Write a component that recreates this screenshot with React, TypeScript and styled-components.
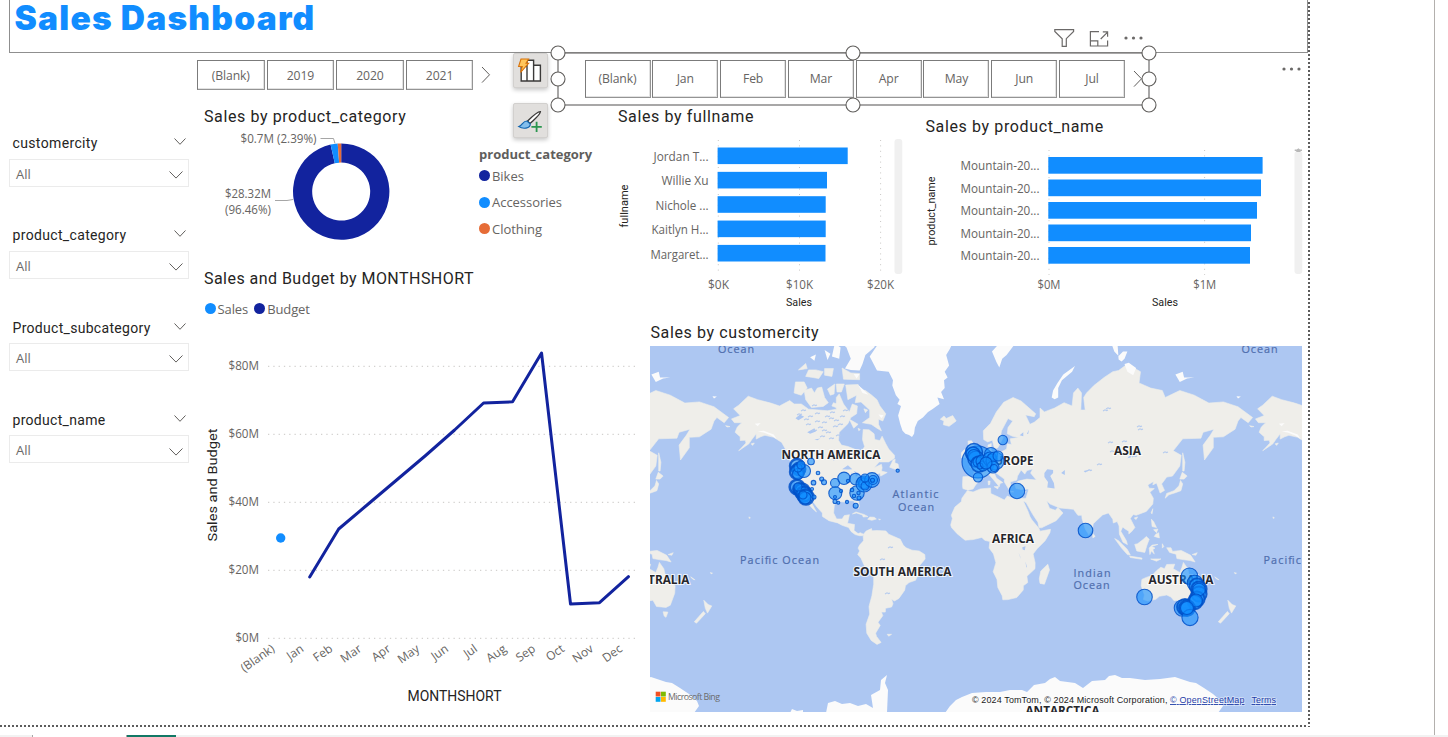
import React from 'react';
import styled, { createGlobalStyle } from 'styled-components';

const UI = "'Open Sans', 'Noto Sans', sans-serif";
const DIN = "Roboto, 'Liberation Sans', sans-serif";
const BLUE = '#118dff';
const NAVY = '#12239e';
const ORANGE = '#e66c37';
const GREY = '#666462';

const Global = createGlobalStyle`
  * { box-sizing: border-box; }
  body { margin: 0; background: #fff; overflow: hidden; font-family: ${UI}; }
  svg { display: block; }
`;

/* ---------- page frame ---------- */

const Page = styled.div`
  width: 1448px;
  height: 737px;
  display: flex;
  flex-direction: column;
  overflow: hidden;
  background: #fff;
`;

const Workspace = styled.div`
  display: flex;
  height: 735px;
  width: 1448px;
  justify-content: space-between;
`;

const SidePane = styled.div`
  width: 14px;
  border-left: 1px solid #b3b0ad;
`;

const Report = styled.main`
  position: relative;
  width: 1310px;
  height: 727px;
  background:
    repeating-linear-gradient(to bottom, #fff 0 2px, #5c5c5c 2px 4px) right top / 2px 727px no-repeat,
    repeating-linear-gradient(to right, #5c5c5c 0 2px, #fff 2px 4px) left bottom / 1310px 2px no-repeat,
    #fff;
`;

const TitleBox = styled.header`
  display: flex;
  align-items: flex-start;
  width: 1299px;
  height: 53px;
  margin-left: 9px;
  padding-left: 4.5px;
  border: solid #8f8f8f;
  border-width: 0 1px 1px 1px;
`;

const Title = styled.h1`
  margin: 0;
  font: 900 33.5px/37px Inter, 'Open Sans', sans-serif;
  letter-spacing: 1.23px;
  white-space: nowrap;
  color: ${BLUE};
`;

const Body = styled.div`
  display: flex;
  height: 672px;
`;

const TabStrip = styled.footer`
  display: flex;
  height: 2px;
  background: #f2f2f2;
`;

const TabSegment = styled.div<{ $w: number; $color: string }>`
  width: ${p => p.$w}px;
  background: ${p => p.$color};
`;

/* ---------- left filters ---------- */

const Filters = styled.aside`
  width: 197px;
  padding: 80px 8px 0 9px;
  display: flex;
  flex-direction: column;
  gap: 38.3px;
`;

const FilterBlock = styled.section`
  height: 54px;
  display: flex;
  flex-direction: column;
`;

const FilterHead = styled.div`
  display: flex;
  justify-content: space-between;
  height: 25.6px;
  padding: 0 3px 0 3.5px;
  font: 400 14px/20px ${DIN};
  color: #252423;
`;

const FilterLabel = styled.span<{ $ls: number }>`
  letter-spacing: ${p => p.$ls}px;
  white-space: nowrap;
`;

const FilterBox = styled.div`
  display: flex;
  justify-content: space-between;
  align-items: center;
  height: 28px;
  padding: 2px 5px 0 6px;
  border: 1px solid #ebebeb;
  font: 400 13px/20px ${UI};
  color: #6c6a69;
`;

/* ---------- content ---------- */

const Content = styled.div`
  width: 1111px;
  display: flex;
  flex-direction: column;
`;

const SlicerRow = styled.div`
  display: flex;
  height: 52px;
  align-items: flex-start;
`;

const YearSlicer = styled.div`
  display: flex;
  align-items: center;
  gap: 2px;
  width: 361px;
  height: 30px;
  margin-top: 7px;
`;

const MonthSlicer = styled.div`
  position: relative;
  display: flex;
  align-items: center;
  gap: 1.8px;
  width: 591px;
  height: 52px;
  padding-left: 26.5px;
  padding-bottom: 1px;
`;

const Tile = styled.button<{ $w: number; $h: number }>`
  flex: none;
  width: ${p => p.$w}px;
  height: ${p => p.$h}px;
  padding: 1px 0 0;
  border: 1px solid #7b7b7b;
  border-right-color: #949494;
  border-bottom-color: #949494;
  box-shadow: inset -1px -1px 0 #e2e2e2;
  background: #fff;
  font: 400 12.2px/18px ${UI};
  letter-spacing: -0.1px;
  color: ${GREY};
`;

const NextIcon = styled.svg`
  flex: none;
  margin-left: 5px;
`;

const SelectionFrame = styled.svg`
  position: absolute;
  left: -8px;
  top: -8px;
  overflow: visible;
`;

const VisualHeader = styled.div`
  position: absolute;
  left: 1054px;
  top: 28px;
`;

const MoreOptions = styled.div`
  position: absolute;
  left: 1282px;
  top: 66px;
`;

const FloatButtons = styled.div`
  position: absolute;
  left: 513px;
  top: 53px;
  display: flex;
  flex-direction: column;
  gap: 15px;
`;

const FloatButton = styled.button`
  width: 35px;
  height: 35px;
  padding: 0;
  border: 1px solid #d2d0ce;
  border-radius: 2px;
  background: #e1dfdd;
  box-shadow: 0 2px 4px rgba(0, 0, 0, 0.22);
`;

const Columns = styled.div`
  display: flex;
`;

const LeftColumn = styled.div`
  width: 415px;
`;

const RightColumn = styled.div`
  width: 696px;
`;

const ChartRow = styled.div`
  display: flex;
  height: 215px;
`;

const Visual = styled.section<{ $w: number; $top?: number }>`
  width: ${p => p.$w}px;
  padding-top: ${p => p.$top ?? 0}px;
`;

const VisualTitle = styled.h2<{ $indent: number; $ls: number; $drop?: number }>`
  margin: 0;
  height: 24px;
  padding-top: ${p => p.$drop ?? 0}px;
  padding-left: ${p => p.$indent}px;
  font: 400 16px/23px ${DIN};
  letter-spacing: ${p => p.$ls}px;
  color: #252423;
  white-space: nowrap;
`;

const Plot = styled.svg`
  overflow: visible;
  font-family: ${UI};
`;

const DonutRow = styled.div`
  display: flex;
  height: 137px;
`;

const Legend = styled.ul`
  list-style: none;
  margin: 0;
  padding: 37.5px 0 0 7px;
`;

const LegendTitle = styled.li`
  height: 20px;
  font: 700 13px/22px ${UI};
  color: #605e5c;
`;

const LegendItem = styled.li`
  display: flex;
  align-items: center;
  gap: 2px;
  height: 26.5px;
  font: 400 13px/18px ${UI};
  letter-spacing: -0.03px;
  color: ${GREY};
`;

const Dot = styled.span<{ $c: string }>`
  width: 11px;
  height: 11px;
  border-radius: 50%;
  background: ${p => p.$c};
`;

const InlineLegend = styled.div`
  display: flex;
  align-items: center;
  gap: 1px;
  height: 30px;
  padding: 6px 0 0 7.5px;
  font: 400 13px/18px ${UI};
  color: ${GREY};
`;

const InlineLabel = styled.span`
  margin-right: 5px;
  padding: 2px 0 0 1px;
  letter-spacing: -0.1px;
`;

const MapSection = styled.section`
  padding-left: 38px;
`;

const MapPlot = styled.svg`
  margin-top: 2px;
  font-family: ${UI};
`;

/* ---------- small pieces ---------- */

const Chevron = ({ w, h }: { w: number; h: number }) => (
  <svg width={w} height={h + 9} viewBox={`0 0 ${w} ${h + 9}`} fill="none" stroke="#605e5c" strokeWidth="1">
    <path d={`M.5 5.5 L${w / 2} ${h + 5.5} L${w - 0.5} 5.5`} />
  </svg>
);

const Next = () => (
  <NextIcon width="12" height="18" viewBox="0 0 12 18" fill="none" stroke="#605e5c">
    <path d="M2 1 L9.5 8.8 L2 16.6" />
  </NextIcon>
);

type TProps = {
  x: number; y: number; s?: number; len?: number; anchor?: 'start' | 'middle' | 'end';
  fill?: string; font?: string; rotate?: number; children: string;
};
const T = ({ x, y, s = 12, len, anchor = 'middle', fill = GREY, font, rotate, children }: TProps) => (
  <text
    x={x} y={y} fontSize={s} textAnchor={anchor} fill={fill} fontFamily={font}
    textLength={len} lengthAdjust={len ? 'spacingAndGlyphs' : undefined}
    transform={rotate ? `rotate(${rotate} ${x} ${y})` : undefined}
  >
    {children}
  </text>
);

const filters = [
  { name: 'customercity', ls: 0.36 },
  { name: 'product_category', ls: 0.34 },
  { name: 'Product_subcategory', ls: 0.3 },
  { name: 'product_name', ls: 0.3 },
];

const years = ['(Blank)', '2019', '2020', '2021'];
const monthTiles = ['(Blank)', 'Jan', 'Feb', 'Mar', 'Apr', 'May', 'Jun', 'Jul'];
const months = ['(Blank)', 'Jan', 'Feb', 'Mar', 'Apr', 'May', 'Jun', 'Jul', 'Aug', 'Sep', 'Oct', 'Nov', 'Dec'];

/* ---------- charts ---------- */

const ring = (a0: number, a1: number) => {
  const cx = 341.2, cy = 191.6, R = 48.2, r = 29;
  const p = (a: number, q: number) => `${(cx + q * Math.sin(a * 2 * Math.PI)).toFixed(2)} ${(cy - q * Math.cos(a * 2 * Math.PI)).toFixed(2)}`;
  const big = a1 - a0 > 0.5 ? 1 : 0;
  return `M${p(a0, R)} A${R} ${R} 0 ${big} 1 ${p(a1, R)} L${p(a1, r)} A${r} ${r} 0 ${big} 0 ${p(a0, r)} Z`;
};

const Donut = () => (
  <Plot width="275" height="125" viewBox="197 129 275 125">
    <path d={ring(0, 0.9646)} fill={NAVY} />
    <path d={ring(0.9646, 0.9885)} fill={BLUE} />
    <path d={ring(0.9885, 1)} fill={ORANGE} />
    <path d="M320.5 138.5 H333.5 L335 143.5" fill="none" stroke="#a6a6a6" />
    <path d="M275 200.5 H287 L293 199.5" fill="none" stroke="#a6a6a6" />
    <T x={316.5} y={143} anchor="end" len={76}>$0.7M (2.39%)</T>
    <T x={271} y={198} anchor="end" len={46}>$28.32M</T>
    <T x={271} y={214} anchor="end" len={46}>(96.46%)</T>
  </Plot>
);

const people: [string, number, number][] = [
  ['Jordan T...', 847.7, 55], ['Willie Xu', 827, 47], ['Nichole ...', 825.7, 53], ['Kaitlyn H...', 825.7, 57], ['Margaret...', 825.5, 58],
];

const FullnameBars = () => (
  <Plot width="300" height="185" viewBox="612 129 300 185">
    {[718.3, 799.5, 880.6].map(x => (
      <line key={x} x1={x} x2={x} y1={140} y2={272} stroke="#c8c6c4" strokeDasharray="1 4.4" />
    ))}
    {people.map(([n, end, len], i) => (
      <g key={n}>
        <rect x={717.6} y={147.5 + i * 24.35} width={end - 717.6} height={16.6} fill={BLUE} />
        <T x={708.5} y={161 + i * 24.45} anchor="end" len={len}>{n}</T>
      </g>
    ))}
    <rect x={894.5} y={139} width={7.8} height={135} rx={3} fill="#f0f0f0" />
    <T x={718.5} y={289} len={21}>$0K</T>
    <T x={799.5} y={289} len={27}>$10K</T>
    <T x={880.5} y={289} len={27}>$20K</T>
    <T x={799} y={306} s={10.5} len={26} font={DIN} fill="#252423">Sales</T>
    <T x={627.5} y={206} s={10.5} len={43} font={DIN} fill="#252423" rotate={-90}>fullname</T>
  </Plot>
);

const productEnds = [1262.6, 1261, 1257, 1251, 1250];

const ProductBars = () => (
  <Plot width="390" height="175" viewBox="918 139 390 175">
    {[1049, 1204.6].map(x => (
      <line key={x} x1={x} x2={x} y1={150} y2={275} stroke="#c8c6c4" strokeDasharray="1 4.4" />
    ))}
    {productEnds.map((end, i) => (
      <g key={end}>
        <rect x={1048.3} y={157 + i * 22.5} width={end - 1048.3} height={16.7} fill={BLUE} />
        <T x={1039.5} y={170 + i * 22.55} anchor="end" len={79}>Mountain-20...</T>
      </g>
    ))}
    <rect x={1294.5} y={151} width={7.8} height={123} rx={3} fill="#f0f0f0" />
    <path d="M1294.7 149.4 H1296.8 L1298.4 148.2 L1300 149.4 H1302 V151 H1300.5 V152 H1296.3 V151 H1294.7Z" fill="#b8b8b8" />
    <T x={1049} y={289} len={23}>$0M</T>
    <T x={1204.7} y={289} len={23}>$1M</T>
    <T x={1165} y={306} s={10.5} len={26} font={DIN} fill="#252423">Sales</T>
    <T x={934.5} y={211} s={10.5} len={69} font={DIN} fill="#252423" rotate={-90}>product_name</T>
  </Plot>
);

const budget = [577, 529, 504.5, 480, 455.5, 430, 403, 401.8, 353, 604, 602.7, 576.7];

const LineChart = () => (
  <Plot width="450" height="395" viewBox="197 320 450 395">
    {[80, 60, 40, 20, 0].map((v, i) => (
      <g key={v}>
        <line x1={268} x2={639} y1={366.3 + i * 68} y2={366.3 + i * 68} stroke="#c8c6c4" strokeDasharray="1.3 4" />
        <T x={259} y={370 + i * 68} anchor="end" len={v ? 30.5 : 23.5}>{`$${v}M`}</T>
      </g>
    ))}
    <polyline
      points={budget.map((y, i) => `${309.7 + i * 28.98},${y}`).join(' ')}
      fill="none" stroke={NAVY} strokeWidth="3" strokeLinejoin="round" strokeLinecap="round"
    />
    <circle cx={280.7} cy={538} r={4.7} fill={BLUE} />
    {months.map((m, i) => (
      <T key={m} x={275.5 + i * 28.98} y={650.5} s={12} anchor="end" rotate={-35}>{m}</T>
    ))}
    <T x={217} y={485} s={13.3} len={113} font={DIN} fill="#252423" rotate={-90}>Sales and Budget</T>
    <T x={454.5} y={701} s={14} len={94} font={DIN} fill="#252423">MONTHSHORT</T>
  </Plot>
);

/* ---------- world map ---------- */

const WORLD = 524;
const px = (lon: number) => 976 + (lon * WORLD) / 360;
const py = (lat: number) => 546.6 - 83.4 * Math.log(Math.tan(Math.PI / 4 + (lat * Math.PI) / 360));

// Each ring is a list of "lon lat" pairs separated by commas.
const ringPath = (s: string) =>
  'M' + s.split(',').map(p => {
    const [lon, lat] = p.trim().split(' ').map(Number);
    return `${px(lon).toFixed(1)} ${py(lat).toFixed(1)}`;
  }).join('L') + 'Z';

const land = [
  '-168 65.6,-162 66.5,-166.5 68.3,-163 69.2,-156.5 71.3,-150 70.5,-141 69.7,-135 69,-128 70.3,-125 69.5,-120 69.5,-115 68.2,-108 68,-102 67.8,-96 68.2,-96 71,-94 71.8,-91 69.5,-87 67.5,-85 69.5,-81.5 69,-82 67,-86 66,-88 64.2,-94 61.5,-94.5 58.8,-92.5 57,-88 56.5,-82.3 55.2,-82 53,-79.8 51.3,-79 54,-76.5 56.5,-78 59,-77.5 62.4,-73.5 62.3,-70 61,-69.5 59,-66 58.7,-64.5 60.2,-62 57.5,-60 55.5,-56 53,-56 51.8,-60 50.2,-66.5 50.2,-70 47.5,-65 49.1,-64.5 47.5,-65 46,-61 45.3,-65.5 43.5,-66 45,-70 43.7,-70.5 42,-74 40.6,-75.8 37.2,-76 35.2,-81 31.5,-80.1 26.5,-81 25.2,-82.7 28,-84 30,-89 30.3,-90 29.2,-94 29.6,-97.3 27.8,-97.8 22.5,-95.8 18.7,-92 18.6,-90.5 20.8,-87 21.4,-88 17,-88.3 15.8,-83.5 15,-83.8 11,-81 8.9,-79.5 9.5,-77.3 8.5,-78 7.5,-80 7.5,-83 8.2,-85.7 10.2,-87.5 13,-92 14.5,-95 16.1,-101 17.5,-105.5 20.3,-105.5 22.5,-109 26,-112.5 30,-114.7 31.7,-113 28.8,-109.6 23.1,-112 25,-114.5 27.5,-117.2 32.5,-120.6 34.6,-122.5 37.5,-124.3 40.4,-124 46,-124.7 48.4,-122.5 48,-123.3 49.2,-127.5 51,-130 54.5,-133.5 58,-139 59.8,-145 60.5,-148 60,-151 59.2,-151 61,-154 59,-156 57.5,-163 54.8,-158 57.8,-158.5 58.8,-162 58.7,-162 60,-165.5 61.5,-164 63.2,-161 64.5,-166 64.5',
  '-65 62,-68 62.8,-72 64,-78 64.5,-73 66,-73 68,-79 70,-83 69.8,-82 71.5,-88 70.5,-89.5 73.6,-81 73.7,-79 72.6,-76 72.5,-72 71.6,-68 70.5,-66 69,-62 67,-64 65,-67 65.5,-67 64',
  '-117 70.5,-118 72.5,-113 73,-111 72,-109 73,-106 73.2,-104 71,-101.5 69.8,-105 68.9,-113 68.6',
  '-125 72,-124 74.2,-118 74.2,-116 73,-120 71.5',
  '-92 76.6,-86 75.8,-80 75.7,-80 74.6,-91 74.7', '-117 75.2,-112 75,-108 74.8,-105 76,-110 76.3,-115 76.3',
  '-96 73.8,-90.5 73.8,-92.5 72.2,-95.5 72.2', '-102 72.8,-97 73.8,-97.5 71.8,-100 71.5', '-98 69.8,-95.5 69.5,-96 68.6,-99 69',
  '-87 65.5,-81 64,-84 62.8', '-104 76.5,-98 76.5,-99 75.2,-104 75.4', '-122 76.3,-117 77.3,-116 76.5', '-77 68.3,-74.5 68,-76 67.3', '-81 62.8,-79.5 62.4,-80.5 62',
  '-59.3 47.8,-57 51,-55.5 51.3,-55.8 49.8,-53.5 49.2,-53 46.8,-56 46.9', '-128 50.8,-125 50,-123.5 48.5,-125.5 48.8', '-133 54,-131.7 53.8,-131.5 52.5',
  '-84.9 21.9,-82.5 23.1,-77 21.6,-74.2 20.2,-77.5 19.9,-78 21.2,-82 22.5', '-74.4 18.4,-73 19.9,-69.9 19.7,-68.4 18.6,-71.5 17.8', '-67 18.5,-65.7 18.4,-66 18',
  '-24.5 65.5,-22 66.4,-20.5 65.7,-16 66.5,-13.6 65,-18.5 63.4,-22.5 63.9,-22 65',
  '-77.3 8.5,-75.5 10.6,-71.8 12.3,-71.5 10.8,-68 11,-62 10.7,-60 8.5,-52 5,-50 1,-48 -.8,-44 -2.5,-39 -3,-35.2 -5.5,-35 -8.5,-38.8 -13,-39.2 -17.8,-41.5 -22.5,-46 -24,-48.5 -26,-49 -28.7,-53 -33.5,-56 -34.9,-58 -34,-57 -36.5,-58 -38.3,-62.2 -39,-62.3 -41,-65 -41,-64 -42.8,-67.3 -46,-65.8 -47.5,-69 -51,-68.3 -52.4,-65.2 -54.8,-68 -55.6,-72 -54,-75 -51,-75.5 -47,-73 -42,-73.5 -38,-71.5 -32,-70.3 -25,-70.3 -18.4,-75.9 -14.7,-79 -8,-81.3 -5.5,-80 -3,-81 -1,-80 1,-77.3 4,-77.5 7',
  '-6 35.8,-2 35.1,3 36.8,10 37.3,10.2 34.2,15.3 32.3,19.5 30.4,21.5 32.8,25 31.6,31 31.5,34.6 31.4,34.5 29,32.5 29.8,35.5 24,37.2 20,38.5 18,43.2 12.5,44 10.5,51.2 11.8,50.8 9.5,47.5 4,42 -1.5,39.2 -5,40.6 -11,40.5 -15,35 -20,35.5 -24,32.5 -26,32.5 -28.5,28 -33,22 -34.2,18.4 -34.3,18 -32,15 -27,14.4 -22,11.8 -17,13.7 -11,12 -5,9 -1,9.5 3.5,6 4.3,4 6.3,-2 4.8,-7.5 4.4,-13 8.8,-16.8 13,-17.4 14.7,-16.2 19,-17 21,-14.5 26.2,-10 29.5,-9.7 31.5',
  '49.3 -12,50.5 -15.8,47 -25,44 -24.5,43.5 -21.5,44.5 -16.5',
  '-9 37,-9.3 38.8,-9 43.2,-1.8 43.4,-1.2 46,-4.5 48,-1.5 48.7,0 49.6,2.5 51,4.5 52.5,7 53.6,8.8 54,8.2 57,10.5 57.6,10.3 55.5,11 54,14 54,18.5 54.7,21 55.5,21.5 57.5,24.3 57.2,23.5 59.3,29.5 59.8,25 60.2,21.5 61,22 63,25.3 65,22 65.7,17.5 62,17 60.5,18.8 59.7,16.5 57.5,15 56,12.8 55.5,11.3 58.8,8 58.2,5.3 59,5 62,10 64.3,14 67.5,19 69.9,25.5 71,31 70.2,41 67,40 66.2,34 66.7,37 64,40 64.6,44 66,44 68.5,47 67.5,54 68.5,60.5 69.8,66 69,67 72,70 73,72.5 72,72 68,75 68,74 71,76 72,81 73.5,88 75,94 76,98 76.2,104 77.2,113 76,112 74,120 73,128 72.5,130 71,140 72.5,150 71.5,160 69.7,170 70,180 68.8,190 66,187 64.5,182 66,180 65,178 62.5,170 60,163 59.8,163 56,157 51,156 57,161 60.5,163.5 62.5,156 61.5,154.5 59.5,142 59.3,135.5 54.8,141 53,140 48.3,135 43.5,131 43,129 41,127.5 39.5,129.5 36,126.5 34.5,125 38,124 40,121.5 39,122 40.8,118 39,119 37.2,122.5 37,119.5 35,121.8 31.5,121.5 28,117 23.5,110 21,108 21.5,106 19,109.2 13,107 10.3,105 8.7,105 10.5,102.5 12,100.8 13.4,99.5 10.5,103.3 4,104 1.4,101 3,98.5 8.5,98.3 14,97 17,94.3 16,94 18.5,91 22.5,87 21.3,80.5 15.5,80 12,77.5 8.1,75 12,72.8 19,72.7 21,70 21,67 24.8,57.5 25.7,51 28,48.5 30,50.5 25.5,54.5 24.2,56.3 26,59.8 22.5,55 17.5,45 12.8,43.3 13,42.5 16.5,39 21.5,35 28,34.5 29,34.2 31.2,35.8 35.5,36 36.8,31 36.5,27.5 37,26.5 39.5,29 41,35 42,41.5 41.5,37.5 45,39 47,35 46.2,33.5 44.5,31 46.5,28.5 43.5,28 41.5,23.5 40.5,24 38,22.5 36.6,19.5 40.5,19.5 42,13.8 45,12.3 45.3,14 42.5,18.4 40.2,16.5 39.7,16 38,12 41.7,8.8 44.4,3.5 43.3,3 41.8,-.3 39,-2 36.8,-5.5 36.1',
  '-5.5 50,1.5 51.3,1.5 52.8,0 53.5,-2 56,-2 57.6,-3 58.6,-5.5 58.5,-5 55,-3 54,-4.5 53,-5 51.8,-3 51.3', '-10 52,-6.2 52.2,-6 54.5,-8 55.3,-10 54',
  '12.5 38,15.5 38.2,15 36.8', '8.3 41,9.7 41,9.5 39.2,8.5 39', '24 35.5,26 35.2,24 35', '32.5 35,34.5 35.5,33.5 34.7',
  '130 31.5,131 34.3,136 35.8,139.5 38.5,140.5 41.3,142 39.5,140.8 35.8,137 34.7,132.5 33.5', '140 42,141.7 45.4,145 43.5,143 42',
  '142 46,142 54,143.5 50,143 46', '120.2 22.5,121.5 25.2,121 22', '108.7 19.3,111 20,110 18.3',
  '120.5 18.5,122 17,124 13,121 13.7', '122.5 7,126 6,125.5 9.5,123.5 8.5', '122 11.5,125 12,124 9.5',
  '109 1.5,111 2,115 5,117 7,119 5,117.5 1,116 -4,110.5 -3', '95.3 5.5,98 4,104 -2,106 -5.8,104 -5.5,100 -1', '105.5 -6.5,114 -7.8,114 -8.7,106 -7.5',
  '119.5 -5.5,119 -1,121 1,125 1.5,120.5 0,123 -1,121.5 -2,122.5 -5,120.5 -3', '120 -8.5,127 -8.4,124 -10', '128 2,129 0,128 -1',
  '131 -.8,134 -.8,135 -3.3,141 -2.6,147.5 -6,150.5 -10.5,147 -9.5,143 -9,138 -8.2,137.5 -5.2,133 -4', '148.5 -5.5,152 -4.2,151 -6', '80 9.5,81.8 7,80.3 6',
  '142.5 -10.8,145.5 -15,146.5 -19,150.5 -22.5,153.3 -26,153 -30.5,150 -37.3,147 -38.5,144 -38.3,140.5 -38,138 -34.5,136 -34.8,134 -32.7,131 -31.5,126 -32.3,123.5 -34,118 -35,115 -34.2,115.7 -31.5,113.5 -26,114 -22,117 -20.7,121 -19.5,124 -16.3,127 -14,129.5 -15,131 -12.2,136.5 -12,135.5 -15,140 -17.6,141.5 -14',
  '145 -40.8,148.3 -41,147 -43.6,145.8 -43', '173 -34.5,176 -37,178.5 -37.7,175.5 -41.5,174 -39', '172.7 -40.6,174 -41.8,168 -46.5,166.5 -45.8',
  '164 -20.3,167 -22.3,165 -21.5', '177.5 -17.5,179 -18,178 -18.4', '-172 63.6,-169 63.3,-171 63.2', '-154.5 57.5,-152.3 57.8,-153.5 56.9', '-61 -51.5,-58 -51.5,-60 -52.3',
  '-156 20,-155 19.4,-155.8 19',
].map(ringPath).join('');

const ice = [
  '-73 78.3,-68 76.2,-60 76,-57 74.5,-57.5 73.5,-55 71.5,-52.5 70.5,-54 69.5,-51.5 69,-53.5 66.5,-52 64,-50.5 62,-48.5 61,-46 60.6,-44 59.9,-42.5 61,-42 63,-40 65,-36.5 66,-33 67.5,-30 68.2,-25 69.5,-26.5 71,-22 70.6,-24 72.2,-21.5 73,-22 74.5,-19.5 75,-21.5 76,-18.5 77,-20.5 78.5,-18 79.3,-12 81.5,-30 83,-60 82,-67 80',
  '-90 76.5,-86 76.3,-80 76.2,-78 77.2,-76 78.5,-70 79.5,-64 81.5,-90 82,-92 80,-89 79.5,-86 78', '-97 80,-93 79.5,-94 78,-99 78.3', '-104 79.2,-100 78.7,-102 77.8', '-114 78.2,-110 78.6,-111 77.7',
  '-81 73.6,-77 72.6,-74 71.6,-78 72', '-67 66.8,-63.5 66.6,-65 65.8', '-84 75.6,-80 75.6,-82 74.8',
  '52 71,53 72.5,56 74,60 75.5,68 76.9,66 76,59 74.5,56.5 73,56.5 71,54 70.6', '11 79,14 77.5,16 76.7,18 78,21 78.5,27 80,16 80',
  '95 79,98 78.4,101 79,104 79,102 78,100 77.6,98 77.9,97 80.5,93 80', '102 77.2,105 77.4,110 76.6,108 75.4,104 76', '137 75.5,142 76,143 75,150 75,145 74.8,140 74.2', '179 71.3,182 71.2,180 70.8',
  '-150 61.8,-146 61.4,-141 60.5,-137 59.2,-139 60.8,-146 62', '-152 64.2,-148 64.4,-150 63.4',
].map(ringPath).join('') +
  'M945 713L950 706 956 700 962 697 972 693 986 692 1000 692 1010 690 1022 690 1027 692 1034 685 1045 683 1050 679 1055 677 1060 681 1075 683 1083 688 1092 681 1105 680 1109 676 1115 675 1122 678 1130 678 1145 680 1160 679 1175 677 1190 682 1196 683 1204 688 1213 694 1221 701 1223 706 1218 713Z' +
  'M826 713L828 703 835 701 842 704 850 703 858 706 866 704 873 708 871 695 880 690 881 680 887 675 885 683 888 690 887 713ZM790 713L792 709 797 711 803 710 803 713Z';

const water = [
  '47 45,49 46.8,53 46.5,53 45,51 43.5,53.5 40,54 37,49 37.5,49.5 40.5,47 43', '-92 46.8,-88 48.7,-85 46.8,-88 46.7', '-87.5 42,-85 45.8,-86.3 42', '-84 46,-80 44.8,-82.5 43.2,-83 45',
  '-83 41.5,-79 42.8,-81 41.8', '-79.5 43.5,-76.3 44,-77 43.3', '31.8 -.5,34 .3,33.5 -2.5,32 -2', '29.2 -4,30.2 -7,31 -8.5,30 -6', '34 -10,35 -14,34.5 -14', '-124 65.8,-121 66.8,-118 66.2,-122 65.2',
  '-116 61.5,-111 62.8,-110 61.8,-114 61', '-111 59,-107 59.4,-109 58.8', '-99 53.5,-97 51,-98 50.8,-99.5 52.5', '104 51.8,109 55.5,109.5 54.8,106 52', '58.5 45,61 46.5,61 44', '30 60.5,32.5 61.5,32.5 60.2', '35 61,36.5 62.3,35.8 60.9', '74 46,79 46.8,75 45.3',
].map(ringPath).join('');

const specks = [
  [801, 411], [808, 417], [815, 414], [822, 423], [829, 419], [818, 428], [833, 427], [812, 431], [826, 433], [836, 436], [820, 437], [830, 413], [804, 420], [840, 417], [843, 411], [812, 406],
  [806, 425], [815, 422], [825, 417], [822, 431], [829, 439], [834, 421], [797, 415], [838, 425],
  [1106, 409], [1103, 411], [1137, 427], [1138, 430], [1122, 442], [1132, 457], [1087, 471], [1110, 452], [1163, 453], [1097, 465], [1108, 443], [880, 560], [885, 594], [888, 548],
];

const Landmass = () => (
  <>
    <path d={land} fill="#efeeea" stroke="#efeeea" strokeWidth=".6" strokeLinejoin="round" />
    <path d={ice} fill="#fbfbfb" />
    <path d={water} fill="#adc7f2" />
    {specks.map(([x, y], i) => (
      <path key={i} d={`M${x} ${y}l2 -1.2 1.6 .8 1.4 -.6`} fill="none" stroke="#b5cbee" strokeWidth="1.1" />
    ))}
  </>
);

// x, y, radius, and a heavier outline where many bubbles stack up.
const bubbles: [number, number, number, number?][] = [
  [797, 466, 7, 2.4], [799, 469, 6.5, 2], [797, 472, 7, 2.4], [798, 474, 5.5], [804, 471, 6.5], [798, 468, 4], [801, 465, 4], [797, 487, 7.3, 2.6], [799, 489, 6, 2], [802, 491, 7.5, 2.4], [804, 494, 7.5, 2.4], [806, 497, 7.5, 2.6], [805, 498, 6], [798, 487, 4], [803, 495, 4],
  [811, 461.5, 3.3], [818, 473, 1.8], [813.5, 482.7, 2.3], [821.7, 479, 2], [824, 482.3, 2.5], [812, 489, 1.5], [814, 497, 2], [835, 483, 4.5], [844, 478.3, 6.2], [835.3, 493.3, 6.5], [848, 481, 1.6], [841, 491, 1.6], [835, 497, 1.5], [835, 501.5, 2], [838.3, 502.8, 1.5], [847, 502, 1.6], [855.7, 505.7, 2.5],
  [855.5, 479, 5.8], [857, 493, 7.2], [852, 490, 1.8], [854, 496, 1.7], [858.5, 493, 1.7], [859, 498, 2], [861.5, 481, 4], [864, 483.5, 5.5, 1.5], [864, 484, 8], [865, 486, 4], [872, 480, 7.4], [873, 480, 4.5], [872.5, 480.3, 2], [865, 478, 4], [897.7, 470.7, 1.6],
  [978, 462, 16], [974, 452, 8.5, 1.5], [973, 454, 7, 1.5], [976, 459, 8, 1.5], [974, 456, 6.5], [979, 464, 8, 1.6], [978, 462, 5], [982, 461, 6], [983, 466, 5], [980, 466, 3], [991, 454, 6.5], [990, 459, 7], [992, 458, 4], [995, 461, 9], [993, 467, 6], [986, 463, 6], [994, 468, 3.5], [998, 456, 5], [978, 477.3, 4.7],
  [1002.8, 440, 4.7], [1017, 491, 7.7], [1085.5, 530.5, 7.3],
  [1144.5, 597, 7.8], [1189.5, 576.3, 8.3], [1195, 583, 7.8], [1197, 586, 7.6, 1.8], [1199, 589, 7.6, 2], [1199, 594, 7.6, 2], [1197, 599, 7.6, 2], [1195, 602, 7.2, 2], [1182.5, 608, 8.3], [1185, 607, 8, 1.8], [1187, 608, 7.8, 2.2], [1190, 617.5, 8.1], [1199, 589.5, 6.3], [1196, 600.5, 6.5], [1187, 608, 6.5],
];

const Continent = ({ x, y, len, children }: { x: number; y: number; len: number; children: string }) => (
  <text
    x={x} y={y} fontSize="12" fontWeight="700" fill="#26262b" stroke="#fff" strokeOpacity=".75" strokeWidth="2.2"
    paintOrder="stroke" textLength={len} lengthAdjust="spacingAndGlyphs"
  >
    {children}
  </text>
);

const Sea = ({ x, y, len, children }: { x: number; y: number; len: number; children: string }) => (
  <text x={x} y={y} fontSize="10.8" fill="#4f6eae" stroke="#4f6eae" strokeWidth=".2" textLength={len}>{children}</text>
);

const WorldMap = () => (
  <MapPlot width="652" height="366" viewBox="650 346 652 366">
    <rect x="650" y="346" width="652" height="366" fill="#adc7f2" />
    <g><Landmass /></g>
    <g transform={`translate(${-WORLD} 0)`}><Landmass /></g>
    <g transform={`translate(${WORLD} 0)`}><Landmass /></g>
    <Sea x={718} y={353} len={36}>Ocean</Sea>
    <Sea x={1241.5} y={353} len={36}>Ocean</Sea>
    <Sea x={892.5} y={498} len={46}>Atlantic</Sea>
    <Sea x={898} y={511} len={36}>Ocean</Sea>
    <Sea x={740} y={564} len={79}>Pacific Ocean</Sea>
    <Sea x={1263.5} y={564} len={79}>Pacific Ocean</Sea>
    <Sea x={1073.5} y={576.5} len={37}>Indian</Sea>
    <Sea x={1073.5} y={589} len={36}>Ocean</Sea>
    <Continent x={781.5} y={458.5} len={99}>NORTH AMERICA</Continent>
    <Continent x={853.5} y={575.5} len={98}>SOUTH AMERICA</Continent>
    <Continent x={992} y={542.5} len={42}>AFRICA</Continent>
    <Continent x={988} y={464.5} len={45.5}>EUROPE</Continent>
    <Continent x={1114} y={454.5} len={27}>ASIA</Continent>
    <Continent x={1148.5} y={583.8} len={65}>AUSTRALIA</Continent>
    <Continent x={624.5} y={583.8} len={65}>AUSTRALIA</Continent>
    <Continent x={1025.5} y={715} len={74}>ANTARCTICA</Continent>
    {bubbles.map(([x, y, r, w], i) => (
      <circle key={i} cx={x} cy={y} r={r} fill={BLUE} fillOpacity=".6" stroke="#0050c8" strokeOpacity=".85" strokeWidth={w ?? 1.1} />
    ))}
    <rect x="655.7" y="691.7" width="4.8" height="4.8" fill="#f25022" />
    <rect x="661" y="691.7" width="4.8" height="4.8" fill="#7fba00" />
    <rect x="655.7" y="697" width="4.8" height="4.8" fill="#00a4ef" />
    <rect x="661" y="697" width="4.8" height="4.8" fill="#ffb900" />
    <text x="668" y="700" fontSize="8.8" fill="#6b6b6b" textLength="52">Microsoft Bing</text>
    <g fontFamily="'Liberation Sans', sans-serif" fontSize="9" fill="#1a1a1a" stroke="#fff" strokeOpacity=".5" strokeWidth="1.5" paintOrder="stroke">
      <text x="972" y="703" textLength="195.5">© 2024 TomTom, © 2024 Microsoft Corporation,</text>
      <text x="1170" y="703" textLength="74.5" fill="#1f3ea8" textDecoration="underline">© OpenStreetMap</text>
      <text x="1251.5" y="703" textLength="24.5" fill="#1f3ea8" textDecoration="underline">Terms</text>
    </g>
  </MapPlot>
);

/* ---------- overlays ---------- */

const handles = [[8, 8], [303, 8], [599, 8], [8, 34], [599, 34], [8, 60], [303, 60], [599, 60]];

const Dots = ({ x = 0, y = 0 }: { x?: number; y?: number }) => (
  <g fill="#6b6968" stroke="none">
    <circle cx={x + 2} cy={y + 3} r="1.6" /><circle cx={x + 9.5} cy={y + 3} r="1.6" /><circle cx={x + 17} cy={y + 3} r="1.6" />
  </g>
);

const App = () => (
  <Page>
    <Global />
    <Workspace>
      <Report>
        <TitleBox><Title>Sales Dashboard</Title></TitleBox>
        <Body>
          <Filters>
            {filters.map(f => (
              <FilterBlock key={f.name}>
                <FilterHead><FilterLabel $ls={f.ls}>{f.name}</FilterLabel><Chevron w={12} h={5.8} /></FilterHead>
                <FilterBox>All<Chevron w={14} h={6.6} /></FilterBox>
              </FilterBlock>
            ))}
          </Filters>
          <Content>
            <SlicerRow>
              <YearSlicer>
                {years.map(y => <Tile key={y} $w={67.6} $h={30}>{y}</Tile>)}
                <Next />
              </YearSlicer>
              <MonthSlicer>
                {monthTiles.map(m => <Tile key={m} $w={66} $h={38}>{m}</Tile>)}
                <Next />
                <SelectionFrame width="607" height="68" viewBox="0 0 607 68">
                  <rect x="8" y="8" width="591" height="52" fill="none" stroke="#7a7978" strokeWidth="1.3" />
                  {handles.map(([x, y]) => (
                    <circle key={`${x}-${y}`} cx={x} cy={y} r="7" fill="#fff" stroke="#605e5c" strokeWidth="1.1" />
                  ))}
                </SelectionFrame>
              </MonthSlicer>
            </SlicerRow>
            <Columns>
              <LeftColumn>
                <DonutRow>
                  <Visual $w={275}>
                    <VisualTitle $indent={7} $ls={0.6}>Sales by product_category</VisualTitle>
                    <Donut />
                  </Visual>
                  <Legend>
                    <LegendTitle>product_category</LegendTitle>
                    <LegendItem><Dot $c={NAVY} />Bikes</LegendItem>
                    <LegendItem><Dot $c={BLUE} />Accessories</LegendItem>
                    <LegendItem><Dot $c={ORANGE} />Clothing</LegendItem>
                  </Legend>
                </DonutRow>
                <Visual $w={450} $top={24}>
                  <VisualTitle $indent={7} $ls={0.46} $drop={1}>Sales and Budget by MONTHSHORT</VisualTitle>
                  <InlineLegend>
                    <Dot $c={BLUE} /><InlineLabel>Sales</InlineLabel>
                    <Dot $c={NAVY} /><InlineLabel>Budget</InlineLabel>
                  </InlineLegend>
                  <LineChart />
                </Visual>
              </LeftColumn>
              <RightColumn>
                <ChartRow>
                  <Visual $w={306}>
                    <VisualTitle $indent={6} $ls={0.62}>Sales by fullname</VisualTitle>
                    <FullnameBars />
                  </Visual>
                  <Visual $w={390} $top={10}>
                    <VisualTitle $indent={7.5} $ls={0.62}>Sales by product_name</VisualTitle>
                    <ProductBars />
                  </Visual>
                </ChartRow>
                <MapSection>
                  <VisualTitle $indent={0.5} $ls={0.62} $drop={1}>Sales by customercity</VisualTitle>
                  <WorldMap />
                </MapSection>
              </RightColumn>
            </Columns>
          </Content>
        </Body>
        <VisualHeader>
          <svg width="92" height="20" viewBox="0 0 92 20" fill="none" stroke="#6b6968" strokeWidth="1.2">
            <path d="M.8 1.7 H19.6 V3.4 L12.3 10.7 V18.4 H8.2 V10.7 L.8 3.4Z" />
            <path d="M45 3.6 H36.4 V18 H53.6 V12.6 M36.4 12.8 H43.8 V18 M46.7 11 L53.4 4.3 M48.8 3.8 H53.6 V8.8" />
            <Dots x={70} y={7} />
          </svg>
        </VisualHeader>
        <MoreOptions>
          <svg width="20" height="6"><Dots /></svg>
        </MoreOptions>
        <FloatButtons>
          <FloatButton aria-label="Suggest a visual">
            <svg width="33" height="33" viewBox="0 0 33 33" fill="#fff" stroke="#3b3a39" strokeWidth="1.4">
              <path d="M7.2 12 H13 V27 H7.2Z M13 6.2 H19.6 V27 H13Z M19.6 11.2 H26.4 V27 H19.6Z" />
              <path d="M7 5 H14.6 L12 9.2 H14.6 L6.6 18.5 L8.2 12.5 H4.6Z" fill="#ffc65c" stroke="#d8730b" strokeWidth="1.1" />
            </svg>
          </FloatButton>
          <FloatButton aria-label="Format visual">
            <svg width="33" height="33" viewBox="0 0 33 33" fill="none">
              <path d="M26.4 7.6 C23.5 7.6 17 13.6 13.6 17 L16 19.6 C19.4 16.2 26.6 10.5 26.4 7.6Z" fill="#fff" stroke="#3b3a39" strokeWidth="1.4" />
              <path d="M13 17 C8.5 17 8.8 21.5 4.8 22.6 C8.5 25.2 16.6 25 16.2 19.8Z" fill="#83beec" stroke="#1366b0" strokeWidth="1.2" />
              <path d="M22.6 17.8 V28 M17.4 22.9 H27.8" stroke="#2b964f" strokeWidth="1.8" />
            </svg>
          </FloatButton>
        </FloatButtons>
      </Report>
      <SidePane />
    </Workspace>
    <TabStrip>
      <TabSegment $w={32} $color="#f2f2f2" />
      <TabSegment $w={1} $color="#a6a6a6" />
      <TabSegment $w={93} $color="#fff" />
      <TabSegment $w={1} $color="#a6a6a6" />
      <TabSegment $w={49} $color="#117865" />
    </TabStrip>
  </Page>
);

export default App;
